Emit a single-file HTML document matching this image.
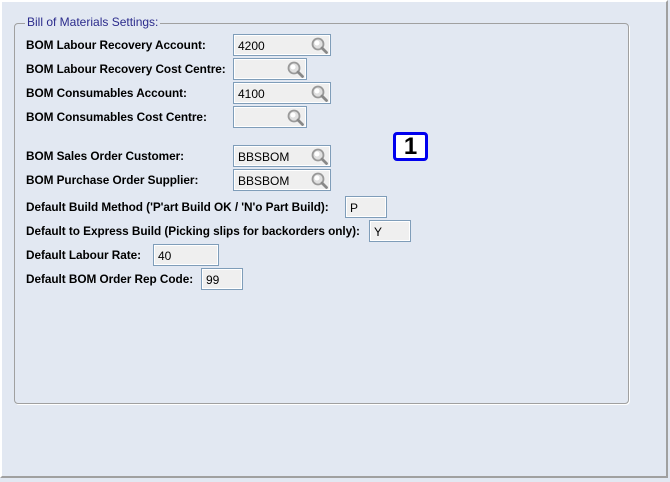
<!DOCTYPE html>
<html><head><style>
*{margin:0;padding:0;box-sizing:border-box}
body{width:670px;height:482px;background:#e2e8f2;font-family:"Liberation Sans",Arial,sans-serif;position:relative;overflow:hidden}
.frame{position:absolute;left:0;top:0;width:668px;height:478px;border-top:2px solid #fff;border-left:2px solid #fff;border-right:2px solid #a0a0a0;border-bottom:2px solid #a0a0a0}
.grp{position:absolute;left:14px;top:23px;width:615px;height:381px;border:1px solid #a0a0a0;border-radius:4px;box-shadow:1px 1px 0 #fff}
.title{position:absolute;left:25px;top:15px;background:#e2e8f2;padding:0 2px;font-size:12px;color:#2b2b8c}
.l{position:absolute;left:26px;font-size:11.8px;letter-spacing:-0.05px;font-weight:bold;color:#000}
.f{position:absolute;height:22px;border:1px solid #7f9db9;background:#efefef;box-shadow:inset 0 0 0 1px #fff;font-size:12px;padding:4px 0 0 4px}
.mg{position:absolute;right:2px;top:2px;width:17px;height:17px}
.badge{position:absolute;left:393px;top:132px;width:35px;height:29px;border:3px solid #0000ee;border-radius:4px;background:#fff;font-size:24px;font-weight:bold;text-align:center;line-height:23px;color:#000}
</style></head><body>
<div class="frame"></div>
<div class="grp"></div>
<div class="title">Bill of Materials Settings:</div>

<div class="l" style="top:38px">BOM Labour Recovery Account:</div>
<div class="l" style="top:62px">BOM Labour Recovery Cost Centre:</div>
<div class="l" style="top:86px">BOM Consumables Account:</div>
<div class="l" style="top:110px">BOM Consumables Cost Centre:</div>
<div class="l" style="top:149px">BOM Sales Order Customer:</div>
<div class="l" style="top:173px">BOM Purchase Order Supplier:</div>
<div class="l" style="top:200px">Default Build Method ('P'art Build OK / 'N'o Part Build):</div>
<div class="l" style="top:224px">Default to Express Build (Picking slips for backorders only):</div>
<div class="l" style="top:248px">Default Labour Rate:</div>
<div class="l" style="top:272px">Default BOM Order Rep Code:</div>

<svg width="0" height="0" style="position:absolute"><defs><g id="m"><circle cx="7" cy="7" r="5.5" fill="#e0e0e0" stroke="#999" stroke-width="1.8"/><circle cx="6" cy="6" r="2.5" fill="#fff"/><path d="M11 11l4.5 4.5" stroke="#888" stroke-width="2.8" stroke-linecap="round"/></g></defs></svg>

<div class="f" style="left:233px;top:34px;width:98px">4200<svg class="mg"><use href="#m"/></svg></div>
<div class="f" style="left:233px;top:58px;width:74px"><svg class="mg"><use href="#m"/></svg></div>
<div class="f" style="left:233px;top:82px;width:98px">4100<svg class="mg"><use href="#m"/></svg></div>
<div class="f" style="left:233px;top:106px;width:74px"><svg class="mg"><use href="#m"/></svg></div>
<div class="f" style="left:233px;top:145px;width:98px">BBSBOM<svg class="mg"><use href="#m"/></svg></div>
<div class="f" style="left:233px;top:169px;width:98px">BBSBOM<svg class="mg"><use href="#m"/></svg></div>
<div class="f" style="left:345px;top:196px;width:42px">P</div>
<div class="f" style="left:369px;top:220px;width:42px">Y</div>
<div class="f" style="left:153px;top:244px;width:66px">40</div>
<div class="f" style="left:201px;top:268px;width:42px">99</div>

<div class="badge">1</div>
</body></html>
